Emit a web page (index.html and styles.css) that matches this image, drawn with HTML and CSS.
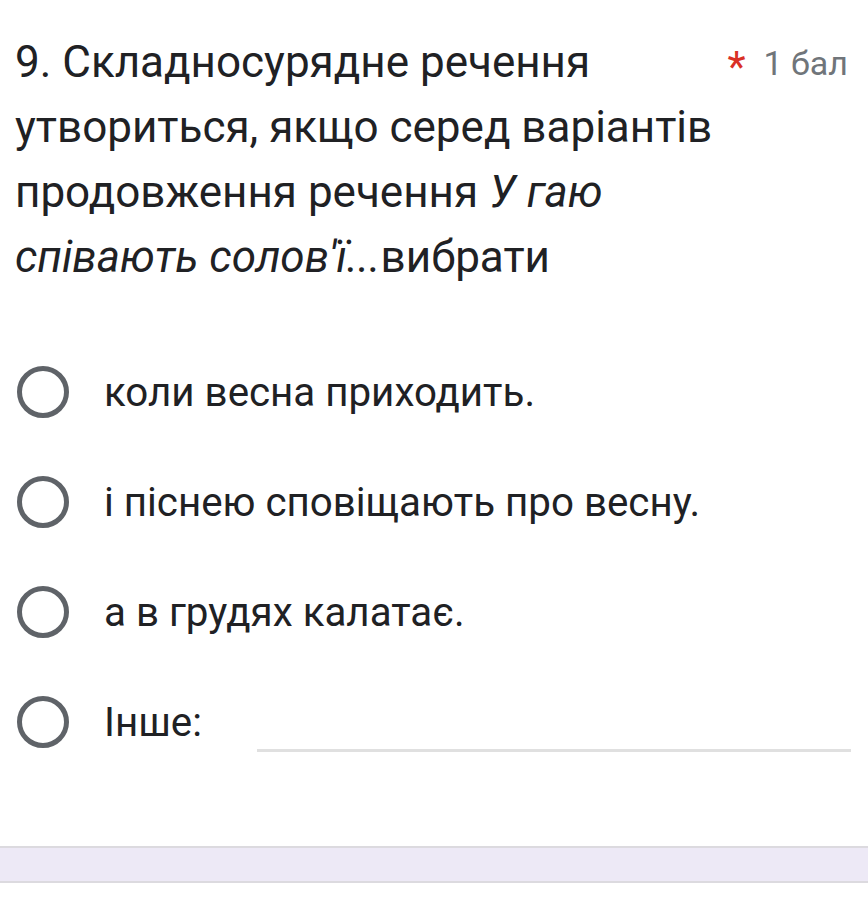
FILE: index.html
```html
<!DOCTYPE html>
<html lang="uk">
<head>
<meta charset="utf-8">
<link rel="stylesheet" href="styles.css">
</head>
<body>
<div class="question">
  <div class="header">
    <div class="title">9. Складносурядне речення утвориться, якщо серед варіантів продовження речення <i>У гаю співають солов'ї...</i>вибрати</div>
    <div class="meta"><span class="star">*</span><span class="points">1 бал</span></div>
  </div>
  <div class="options">
    <div class="option"><span class="radio"></span><span class="label">коли весна приходить.</span></div>
    <div class="option"><span class="radio"></span><span class="label">і піснею сповіщають про весну.</span></div>
    <div class="option"><span class="radio"></span><span class="label">а в грудях калатає.</span></div>
    <div class="option other"><span class="radio"></span><span class="label">Інше:</span><span class="other-input"></span></div>
  </div>
</div>
<div class="band"></div>
</body>
</html>
```
FILE: styles.css
```css
html, body {
  margin: 0;
  padding: 0;
  background: #ffffff;
}
body {
  font-family: Roboto, "Noto Sans", sans-serif;
  color: #202124;
  width: 868px;
  height: 911px;
  overflow: hidden;
}
.question {
  padding: 30px 20px 0 15px;
}
.header {
  display: flex;
  align-items: flex-start;
}
.title {
  flex: 1;
  font-size: 44px;
  line-height: 65px;
  max-width: 715px;
}
.title i {
  font-style: italic;
}
.meta {
  margin-left: auto;
  display: flex;
  align-items: center;
  height: 65px;
  white-space: nowrap;
}
.star {
  color: #d93025;
  font-size: 42px;
  margin-right: 18px;
  position: relative;
  top: 4px;
}
.points {
  color: #70757a;
  font-size: 34px;
}
.options {
  margin-top: 47px;
  display: flex;
  flex-direction: column;
}
.option {
  height: 110px;
  display: flex;
  align-items: center;
}
.radio {
  width: 42px;
  height: 42px;
  border: 5px solid #5f6368;
  border-radius: 50%;
  margin-left: 2px;
  flex: none;
}
.label {
  font-size: 40.3px;
  margin-left: 35px;
}
.other-input {
  flex: 1;
  height: 3px;
  background: #e0e0e0;
  margin-left: 55px;
  margin-top: 56px;
  margin-right: -3px;
}
.band {
  margin-top: 69px;
  height: 33px;
  background: #ede9f6;
  border-top: 2px solid #dcdadf;
  border-bottom: 2px solid #dcdadf;
}
```
